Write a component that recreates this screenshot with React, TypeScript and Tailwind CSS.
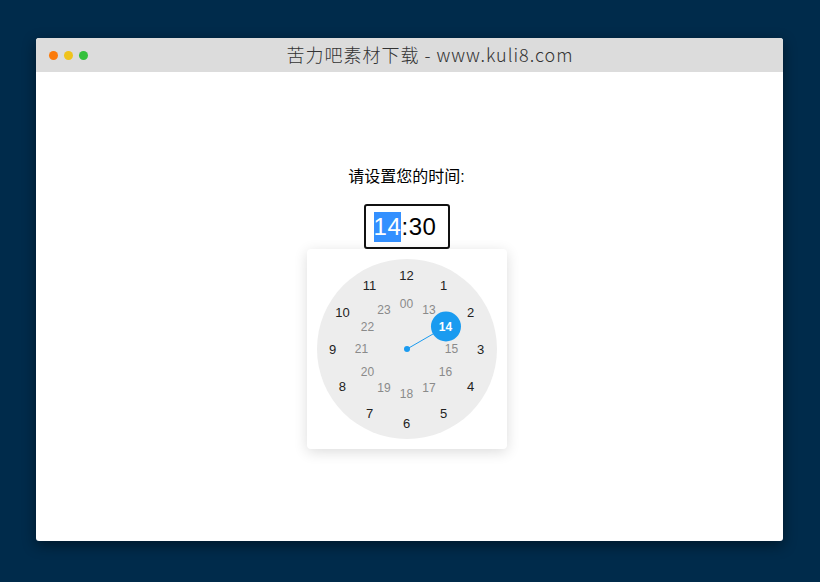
import React from "react"

const outer = [12, 1, 2, 3, 4, 5, 6, 7, 8, 9, 10, 11]
const inner = ["00", "13", "14", "15", "16", "17", "18", "19", "20", "21", "22", "23"]

// clock geometry inside the 180px dial
const C = 90
const R_OUT = 74
const R_IN = 45

function pos(i: number, r: number) {
  const a = (i / 12) * Math.PI * 2
  return { left: C + Math.sin(a) * r, top: C - Math.cos(a) * r }
}

function Clock() {
  const sel = pos(2, R_IN)
  return (
    <div className="relative w-[180px] h-[180px] rounded-full bg-[#ededed]">
      <svg className="absolute inset-0" width="180" height="180">
        <line x1={C} y1={C} x2={sel.left} y2={sel.top} stroke="#1a9bf0" strokeWidth="1" />
        <circle cx={C} cy={C} r="3" fill="#1a9bf0" />
        <circle cx={sel.left} cy={sel.top} r="15" fill="#1a9bf0" />
      </svg>
      {outer.map((n, i) => {
        const p = pos(i, R_OUT)
        return (
          <span
            key={n}
            className="absolute -translate-x-1/2 -translate-y-1/2 text-[13px] leading-none text-[#222]"
            style={{ left: p.left, top: p.top }}
          >
            {n}
          </span>
        )
      })}
      {inner.map((n, i) => {
        const p = pos(i, R_IN)
        const active = n === "14"
        return (
          <span
            key={n}
            className={
              active
                ? "absolute -translate-x-1/2 -translate-y-1/2 text-[12px] leading-none font-bold text-white"
                : "absolute -translate-x-1/2 -translate-y-1/2 text-[12px] leading-none text-[#8a8a8a]"
            }
            style={{ left: p.left, top: p.top }}
          >
            {n}
          </span>
        )
      })}
    </div>
  )
}

export default function App() {
  return (
    <div className="min-h-[582px] bg-[#002b4b] pt-[38px] pl-[36px] font-['Liberation_Sans',Arial,sans-serif]">
      <div className="w-[747px] h-[503px] bg-white rounded-[3px] overflow-hidden shadow-[0_4px_14px_rgba(0,0,0,0.45)] flex flex-col">
        {/* title bar */}
        <div className="h-[34px] bg-[#dcdcdc] flex items-center pl-[13px] shrink-0">
          <div className="flex gap-[6px] pt-[1px]">
            <span className="w-[9px] h-[9px] rounded-full bg-[#fb7b0b]" />
            <span className="w-[9px] h-[9px] rounded-full bg-[#efc31c]" />
            <span className="w-[9px] h-[9px] rounded-full bg-[#33c03b]" />
          </div>
          <div className="flex-1 text-center pl-[10px] pr-[21px] pb-[3px] text-[18px] font-light tracking-[1px] text-[#333] font-['Noto_Sans_CJK_SC',sans-serif] leading-none">
            苦力吧素材下载 - www.kuli8.com
          </div>
        </div>

        {/* content */}
        <div className="flex-1 flex flex-col items-center pt-[95px] pr-[6px]">
          <p className="text-[16px] leading-[20px] text-black font-['Liberation_Sans','Noto_Sans_CJK_SC',sans-serif]">
            请设置您的时间:
          </p>
          <div className="relative mt-[17px]">
            <div className="w-[86px] h-[45px] border-2 border-[#111] rounded-[3px] flex items-center pl-[8px] text-[24px] tracking-[0.6px] text-black">
              <span className="bg-[#3390ff] text-white leading-[30px]">14</span>
              <span className="leading-[30px]">:30</span>
            </div>
            <div className="absolute top-[45px] left-1/2 -translate-x-1/2 w-[200px] h-[200px] bg-white rounded-[4px] shadow-[0_3px_14px_rgba(0,0,0,0.14)] p-[10px]">
              <Clock />
            </div>
          </div>
        </div>
      </div>
    </div>
  )
}
